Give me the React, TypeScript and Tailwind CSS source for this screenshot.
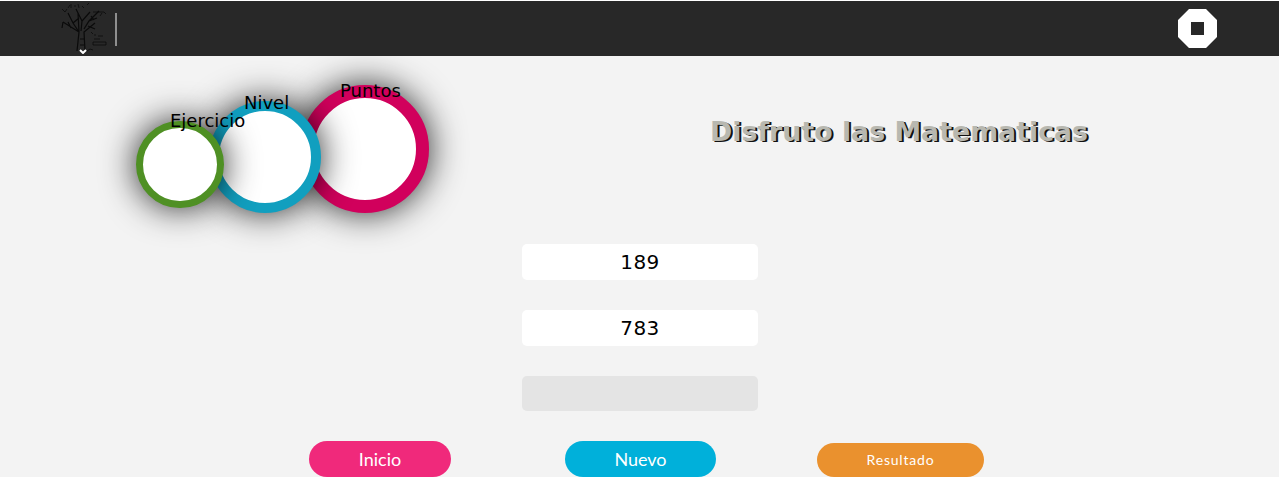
const sans = "font-['DejaVu_Sans',sans-serif]";

function Logo() {
  return (
    <svg width="50" height="55" viewBox="0 0 50 55" fill="none" stroke="#0a0a0a" strokeWidth="0.8" className="block">
      <path strokeWidth="1.2" d="M19 50 L21 31 L5 21 M27 50 L26 31 L37 22 M21 31 L15 22 L10 12 M21 31 L20 12 M23 30 L24 20 L32 11 M26 28 L31 20 L41 10 M31 20 L39 17 M5 21 L4 27 M10 21 L13 27 M15 22 L21 17 M24 20 L18 8 M33 15 L36 19 M30 25 L37 28 M22 38 L26 38 M22 44 L26 44" />
      <path d="M4 8 l3 3 l2 -3 M10 7 l2 -3 M13 3 v4 M16 5 h2 M20 3 l1 4 M24 5 l2 2 M29 4 l2 -2 M35 11 h4 M39 11 h7 l2 2 M44 12 l-2 3 M36 34 h2 M40 35 h5 M36 38 h6 M35 41 h13 v3 h-13 z M33 31 l2 2 M29 50 l3 -2 l3 1" />
    </svg>
  );
}

function Ring({ size, border, color, label, labelClass, z }: { size: string; border: string; color: string; label: string; labelClass: string; z: string }) {
  return (
    <div className={`relative ${z} ${size}`}>
      <div className={`h-full w-full rounded-full bg-white shadow-[0_0_35px_rgba(0,0,0,0.85)] ${border} ${color}`} />
      <span className={`absolute text-lg leading-[22px] text-black ${labelClass}`}>{label}</span>
    </div>
  );
}

function Field({ value, muted }: { value?: string; muted?: boolean }) {
  return (
    <div className={`flex w-[236px] items-center justify-center rounded-[5px] text-xl tracking-[0.5px] text-black ${muted ? "h-[35px] bg-[#e4e4e4]" : "h-9 bg-white"}`}>
      {value}
    </div>
  );
}

export default function App() {
  return (
    <div className={`h-[488px] overflow-hidden bg-white ${sans}`}>
      <div className="mt-px flex h-[55px] items-start justify-between bg-[#282828]">
        <div className="flex items-start">
          <div className="relative ml-[58px] h-[55px] w-[50px]">
            <Logo />
            <svg width="8" height="5" viewBox="0 0 8 5" className="absolute left-[21px] top-[48px]">
              <path d="M1 1 L4 4 L7 1" stroke="#fff" strokeWidth="2" fill="none" />
            </svg>
          </div>
          <div className="ml-[7px] mt-3 h-[33px] w-[2px] bg-[#8f8f8f]" />
        </div>
        <svg width="39" height="39" viewBox="0 0 39 39" className="mr-[62px] mt-2">
          <path fillRule="evenodd" fill="#fff" d="M11 0 H28 L39 11 V28 L28 39 H11 L0 28 V11 Z M13 13 V26 H26 V13 Z" />
        </svg>
      </div>

      <div className="h-[421px] overflow-hidden bg-[#f3f3f3]">
        <div className="flex h-[188px] items-start">
          <div className="ml-[136px] mt-[29px] flex items-end">
            <Ring size="h-[87px] w-[88px] mb-[5px]" border="border-[7px]" color="border-[#4f9024]" label="Ejercicio" labelClass="-top-[11px] left-[34px] whitespace-nowrap" z="z-30" />
            <Ring size="h-[112px] w-[112px] -ml-[15px]" border="border-[10px]" color="border-[#119fbf]" label="Nivel" labelClass="-top-[9px] left-[35px]" z="z-20" />
            <Ring size="h-[128px] w-[128px] -ml-[20px]" border="border-[13px]" color="border-[#d1005c]" label="Puntos" labelClass="-top-[5px] left-[39px]" z="z-10" />
          </div>
          <h1 className="ml-[281px] mt-[60px] whitespace-nowrap text-[26.8px] font-bold leading-[32px] text-[#b8b8b0] [text-shadow:2px_1px_0_#111]">
            Disfruto las Matematicas
          </h1>
        </div>

        <div className="flex flex-col items-center gap-[30px] pl-px">
          <Field value="189" />
          <Field value="783" />
          <Field muted />
        </div>

        <div className="mt-[30px] flex items-start font-['Lato',sans-serif] text-white">
          <button className="ml-[309px] h-9 w-[142px] rounded-[18px] bg-[#f0297b] text-lg">Inicio</button>
          <button className="ml-[114px] h-9 w-[151px] rounded-[18px] bg-[#00b0da] text-lg">Nuevo</button>
          <button className="ml-[101px] mt-[2px] h-[34px] w-[167px] rounded-[17px] bg-[#ea912e] text-sm tracking-[0.8px]">Resultado</button>
        </div>
      </div>
    </div>
  );
}
